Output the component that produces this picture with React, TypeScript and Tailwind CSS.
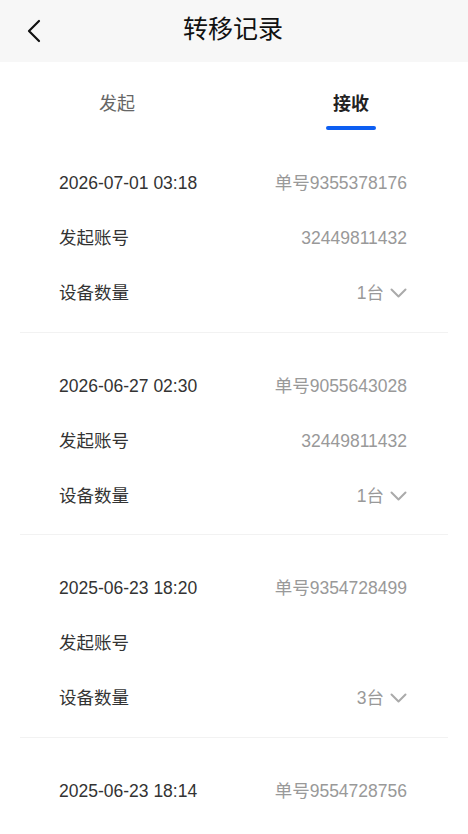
import React from "react";

type Rec = { time: string; no: string; account: string; count: string };

const records: Rec[] = [
  { time: "2026-07-01 03:18", no: "9355378176", account: "32449811432", count: "1台" },
  { time: "2026-06-27 02:30", no: "9055643028", account: "32449811432", count: "1台" },
  { time: "2025-06-23 18:20", no: "9354728499", account: "", count: "3台" },
  { time: "2025-06-23 18:14", no: "9554728756", account: "32449811432", count: "2台" },
];

const font = { fontFamily: '"Liberation Sans", Arial, "Noto Sans CJK SC", sans-serif' };

function Card({ r }: { r: Rec }) {
  return (
    <div className="mx-[20px] border-b border-[#f2f2f2] pt-[26px] pb-[10.5px]">
      <div className="pl-[39px] pr-[41px] text-[17.5px]">
        <div className="h-[55px] flex items-center justify-between">
          <span className="text-[#333]">{r.time}</span>
          <span className="text-[#999]">单号{r.no}</span>
        </div>
        <div className="h-[55px] flex items-center justify-between">
          <span className="text-[#333]">发起账号</span>
          <span className="text-[#999]">{r.account}</span>
        </div>
        <div className="h-[55px] flex items-center justify-between">
          <span className="text-[#333]">设备数量</span>
          <span className="flex items-center text-[#999]">
            {r.count}
            <svg width="17" height="11" viewBox="0 0 17 11" className="ml-[6px]" fill="none">
              <polyline points="1.5,1.5 8.5,8.5 15.5,1.5" stroke="#aaa" strokeWidth="2" strokeLinecap="round" strokeLinejoin="round" />
            </svg>
          </span>
        </div>
      </div>
    </div>
  );
}

export default function App() {
  return (
    <div className="w-[468px] min-h-[834px] bg-white" style={font}>
      <div className="h-[62px] bg-[#f7f7f7] flex items-center relative">
        <div className="w-[62px] flex items-center justify-center pl-[5px]">
          <svg width="16" height="24" viewBox="0 0 16 24" fill="none">
            <polyline points="13,2 3,12 13,22" stroke="#111" strokeWidth="2.2" strokeLinecap="round" strokeLinejoin="round" />
          </svg>
        </div>
        <div className="absolute inset-0 flex items-center justify-center pointer-events-none">
          <span className="text-[25px] text-[#111] leading-none pb-[4px] pr-[2px]">转移记录</span>
        </div>
      </div>
      <div className="h-[68px] flex">
        <div className="flex-1 flex flex-col items-center pt-[29px]">
          <span className="text-[18px] leading-[26px] text-[#666]">发起</span>
        </div>
        <div className="flex-1 flex flex-col items-center pt-[29px]">
          <span className="text-[18px] leading-[26px] text-[#222] font-bold">接收</span>
          <div className="mt-[9px] w-[50px] h-[4px] rounded-full bg-[#0d5ef2]" />
        </div>
      </div>
      {records.map((r, i) => (
        <Card key={i} r={r} />
      ))}
    </div>
  );
}
